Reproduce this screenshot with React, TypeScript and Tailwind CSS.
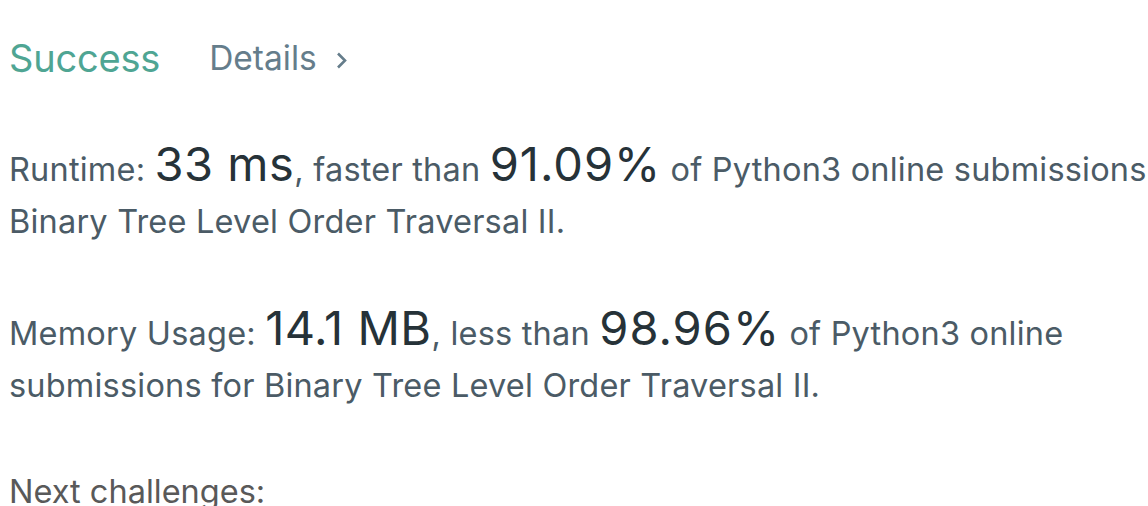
import React from "react";

export default function App() {
  return (
    <div
      className="w-[1148px] h-[506px] overflow-hidden bg-white"
      style={{ fontFamily: "Inter, 'Noto Sans', sans-serif" }}
    >
      <div className="w-[1240px] pl-[9px]">
        <div className="flex items-center h-[58px] mt-[29px]">
          <span className="text-[38px] text-[#4fa593] tracking-[-0.2px]">Success</span>
          <span className="ml-[49px] text-[33.5px] text-[#657d8b]">Details</span>
          <svg className="ml-[18px] mt-[5px]" width="13" height="19" viewBox="0 0 13 19">
            <path d="M3 2.5 L10 9.5 L3 16.5" stroke="#657d8b" strokeWidth="2.6" fill="none" />
          </svg>
        </div>
        <p className="mt-[51px] text-[32.5px] leading-[52px] text-[#4b5b66] tracking-[0.2px]">
          Runtime: <span className="text-[47px] text-[#263238] tracking-[0.5px]">33 ms</span>, faster than{" "}
          <span className="text-[47px] text-[#263238] tracking-[1px]">91.09%</span> of Python3 online submissions for Binary Tree Level Order Traversal II.
        </p>
        <p className="mt-[54px] w-[1100px] text-[32.5px] leading-[52px] text-[#4b5b66] tracking-[0.2px]">
          Memory Usage: <span className="text-[47px] text-[#263238] tracking-[0.5px]">14.1 MB</span>, less than{" "}
          <span className="text-[47px] text-[#263238] tracking-[1px]">98.96%</span> of Python3 online submissions for Binary Tree Level Order Traversal II.
        </p>
        <p className="mt-[54px] text-[32.5px] leading-[52px] text-[#595959]">Next challenges:</p>
      </div>
    </div>
  );
}
